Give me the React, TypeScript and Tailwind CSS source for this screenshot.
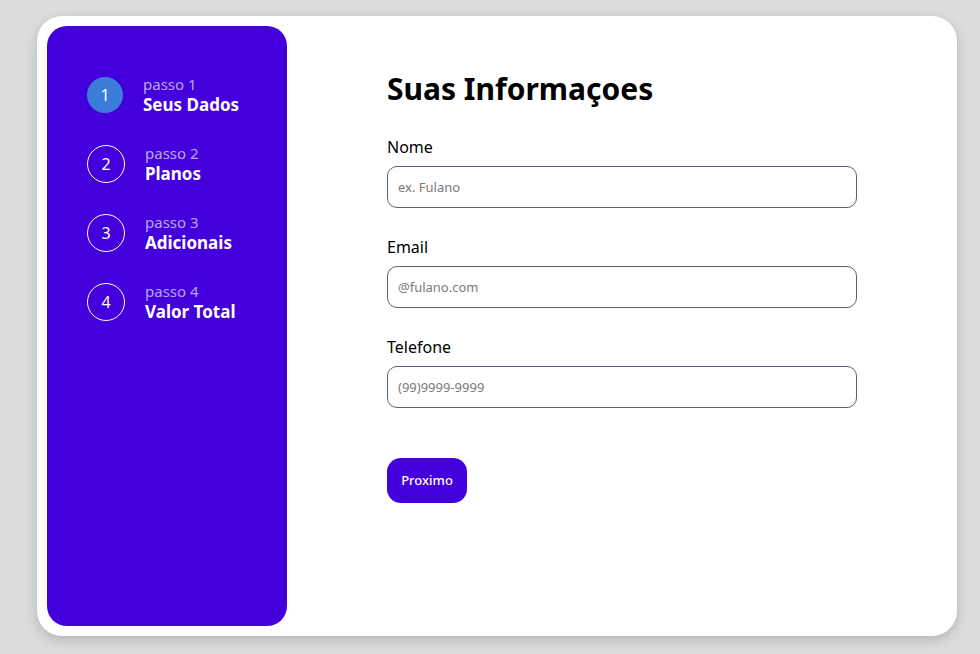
import React from "react";

const steps = [
  { n: 1, label: "Seus Dados", active: true },
  { n: 2, label: "Planos", active: false },
  { n: 3, label: "Adicionais", active: false },
  { n: 4, label: "Valor Total", active: false },
];

const fields = [
  { label: "Nome", placeholder: "ex. Fulano" },
  { label: "Email", placeholder: "@fulano.com" },
  { label: "Telefone", placeholder: "(99)9999-9999" },
];

export default function App() {
  return (
    <div
      className="min-h-screen w-full bg-[#dcdcdc] pl-[37px] pt-[16px]"
      style={{ fontFamily: '"Noto Sans", "Open Sans", sans-serif' }}
    >
      <div className="flex h-[620px] w-[920px] rounded-[25px] bg-white p-[10px] shadow-[0_4px_12px_rgba(0,0,0,0.18)]">
        <aside className="flex h-full w-[240px] shrink-0 flex-col gap-[31px] rounded-[20px] bg-[#4400dc] pl-[40px] pt-[50px]">
          {steps.map((s) => (
            <div key={s.n} className="flex h-[38px] items-center gap-5">
              {s.active ? (
                <div className="flex h-9 w-9 items-center justify-center rounded-full bg-[#3b7dd8] text-[16px] text-white">
                  {s.n}
                </div>
              ) : (
                <div className="flex h-[38px] w-[38px] items-center justify-center rounded-full border border-white text-[16px] text-white">
                  {s.n}
                </div>
              )}
              <div className="flex flex-col">
                <span className="text-[15px] leading-[19px] text-[#b9a7ee]">passo {s.n}</span>
                <span className="text-[17px] font-bold leading-[21px] text-white">{s.label}</span>
              </div>
            </div>
          ))}
        </aside>
        <main className="flex flex-col pl-[100px] pt-[43px]">
          <h1 className="text-[30px] font-bold leading-[40px] text-black">Suas Informaçoes</h1>
          <div className="mt-[28px] flex flex-col gap-[29px]">
            {fields.map((f) => (
              <div key={f.label} className="flex flex-col gap-[9px]">
                <label className="text-[16px] leading-[20px] text-black">{f.label}</label>
                <input
                  placeholder={f.placeholder}
                  className="h-[42px] w-[470px] rounded-[10px] border border-[#5b6078] px-[10px] text-[13px] outline-none placeholder:text-[#7a7a7a]"
                />
              </div>
            ))}
          </div>
          <button className="mt-[50px] h-[45px] w-[80px] rounded-[14px] bg-[#4400dc] text-[13px] font-medium text-white">
            Proximo
          </button>
        </main>
      </div>
    </div>
  );
}
